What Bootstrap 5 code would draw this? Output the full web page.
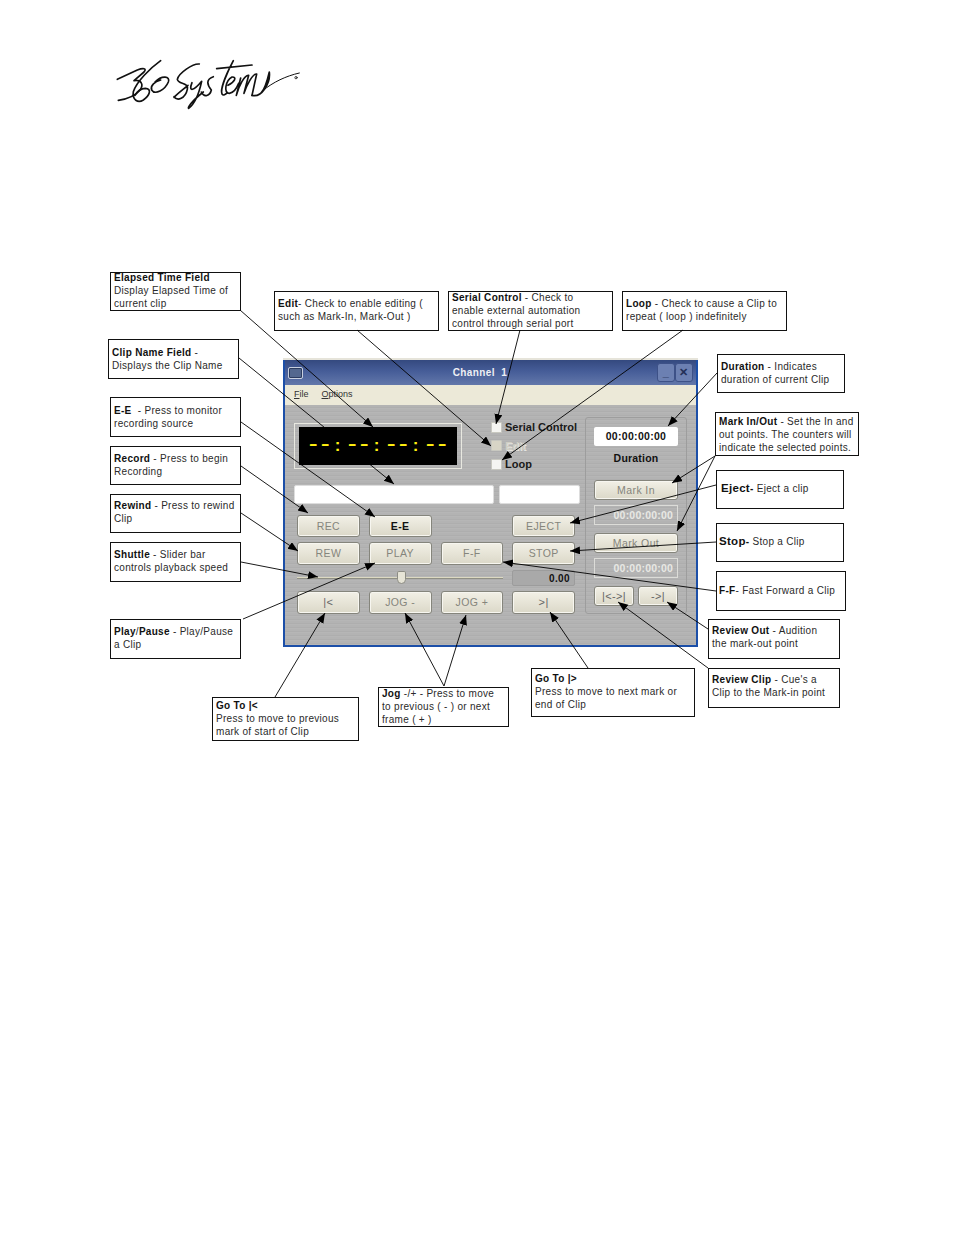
<!DOCTYPE html>
<html lang="en">

<head>
    <meta charset="UTF-8">
    <meta name="viewport" content="width=device-width, initial-scale=1.0">
    <title>Channel 1 control window</title>
    <link href="https://cdn.jsdelivr.net/npm/bootstrap@5.3.0/dist/css/bootstrap.min.css" rel="stylesheet">
    <style>
        body { background: #fff; font-family: "Liberation Sans", Arial, sans-serif; }
        .stage { width: 954px; height: 1235px; overflow: hidden; }
        .logo-mark { left: 100px; top: 40px; width: 220px; height: 80px; }
        .leaders { left: 0; top: 0; z-index: 5; pointer-events: none; }

        /* callouts */
        .callout { background: #fff; border: 1px solid #111; color: #2a2a2a; font-size: 10px; line-height: 13px; letter-spacing: .3px; padding: 0 3px; white-space: nowrap; }
        .callout b { color: #111; }
        .pull-2 { margin-top: -2px; }
        .pull-1 { margin-top: -1px; }
        #c-elapsed { left: 110px; top: 272px; width: 131px; height: 39px; }
        #c-clip { left: 108px; top: 339px; width: 131px; height: 40px; padding-top: 6px; }
        #c-ee { left: 110px; top: 397px; width: 131px; height: 40px; padding-top: 6px; }
        #c-record { left: 110px; top: 446px; width: 131px; height: 39px; padding-top: 5px; }
        #c-rewind { left: 110px; top: 494px; width: 131px; height: 39px; padding-top: 4px; }
        #c-shuttle { left: 110px; top: 542px; width: 131px; height: 40px; padding-top: 5px; }
        #c-play { left: 110px; top: 619px; width: 131px; height: 40px; padding-top: 5px; }
        #c-edit { left: 274px; top: 291px; width: 165px; height: 40px; padding-top: 5px; }
        #c-serial { left: 448px; top: 291px; width: 165px; height: 40px; }
        #c-loop { left: 622px; top: 291px; width: 165px; height: 40px; padding-top: 5px; }
        #c-duration { left: 717px; top: 354px; width: 128px; height: 39px; padding-top: 5px; }
        #c-mark { left: 715px; top: 412px; width: 144px; height: 44px; padding-top: 2px; }
        #c-eject { left: 716px; top: 470px; width: 128px; height: 39px; padding: 11px 4px 0; }
        #c-stop { left: 716px; top: 523px; width: 128px; height: 39px; padding: 11px 2px 0; }
        #c-ff { left: 716px; top: 571px; width: 130px; height: 40px; padding: 12px 2px 0; }
        #c-revout { left: 708px; top: 619px; width: 132px; height: 40px; padding-top: 4px; }
        #c-revclip { left: 708px; top: 668px; width: 132px; height: 40px; padding-top: 4px; }
        #c-gostart { left: 212px; top: 697px; width: 147px; height: 44px; padding-top: 1px; }
        #c-jog { left: 378px; top: 687px; width: 131px; height: 40px; }
        #c-goend { left: 531px; top: 668px; width: 164px; height: 49px; padding-top: 3px; }
        .callout .big { font-size: 11.5px; }

        /* channel window */
        .chan-win { left: 283px; top: 360px; width: 415px; height: 287px; background: #b2b2b2; border: solid #1c4fa8; border-width: 0 2px 2px; box-shadow: 0 -2px 0 #e6e4da; }
        .title-strip { height: 25px; padding: 3px; background: linear-gradient(#34497f, #465d98 45%, #6277aa); color: #eef0f4; font-size: 10px; font-weight: 700; letter-spacing: .4px; }
        .sys-box { width: 15px; height: 12px; border: 1px solid #c8d0e0; border-radius: 2px; background: #54688f; box-shadow: inset 0 0 0 1px #2c3c60; }
        .title-text { white-space: nowrap; }
        .win-ctl { width: 18px; height: 19px; background: #6c80b2; border: 1px solid #3d5187; border-radius: 3px; color: #233058; font-size: 11px; line-height: 17px; text-align: center; }
        .menu-strip { height: 20px; padding-left: 9px; background: #ece9d8; color: #333; font-size: 9px; gap: 13px; }
        .menu-strip u { text-underline-offset: 1px; }
        .metal { height: 240px; padding-left: 9px; background: repeating-linear-gradient(0deg, #b6b6b6 0 1px, #aeaeae 1px 2px, #b3b3b3 2px 4px); }
        .left-side { width: 286px; padding-top: 18px; }
        .clock-frame { width: 168px; height: 46px; border: 1px solid #e8e8e0; padding: 3px 4px; flex-shrink: 0; }
        .clock-face { background: #000; height: 38px; color: #ffef10; font-family: "Liberation Mono", monospace; font-size: 24px; line-height: 36px; letter-spacing: -2.4px; padding-left: 7px; white-space: nowrap; overflow: hidden; }
        .clock-face i { font-family: "Liberation Sans", sans-serif; font-weight: 700; font-style: normal; display: inline-block; width: 15px; text-align: center; font-size: 17px; line-height: 20px; letter-spacing: 0; }
        .checks { height: 46px; padding-left: 29px; margin-top: -5px; flex-shrink: 0; }
        .check-row { height: 18.5px; gap: 3px; font-size: 11px; font-weight: 700; color: #1a1a1a; white-space: nowrap; }
        .check-row.off { color: #cfcdc2; text-shadow: 1px 1px 0 #e4e4e0; }
        .check-dot { width: 11px; height: 11px; background: #f5f5f2; border: 1px solid #c8c8c0; border-radius: 1px; flex-shrink: 0; }
        .off .check-dot { background: #d8d5c6; }
        .blank-field { height: 19px; background: #fff; border: 1px solid #ddd; border-radius: 2px; }
        .field-row { margin-top: 16px; gap: 5px; }
        .w-name { width: 200px; }
        .w-tc { width: 81px; }
        .deck { margin: 11px 0 0 3px; width: 278px; display: grid; grid-template-columns: repeat(4, 1fr); grid-template-rows: 22px 23px 16px 23px; gap: 5px 9px; }
        .deck-btn { padding: 0; background: linear-gradient(#f2f0e6, #dbd8c8); border: 1px solid #85857c; border-radius: 3px; color: #85857c; font-size: 10.5px; letter-spacing: .4px; line-height: 1; box-shadow: inset 0 0 0 1px #f7f6f0; }
        .deck-btn.live { color: #111; font-weight: 700; }
        .btn-tall { font-size: 11px; color: #666; }
        .span-3 { grid-column: span 3; }
        .shuttle { height: 16px; }
        .shuttle-track { height: 2px; background: #dcd9c2; border-bottom: 1px solid #8f8f84; }
        .shuttle-thumb { left: 100px; top: 1px; width: 9px; height: 13px; background: #e6e4d6; border: 1px solid #8c8c84; border-radius: 2px 2px 5px 5px; }
        .speed { background: #a9a9a9; border: 1px solid #9c9c9c; border-radius: 2px; color: #111; font-size: 10px; font-weight: 700; padding-right: 4px; text-align: right; line-height: 15px; letter-spacing: .4px; }
        .right-side { width: 102px; height: 197px; margin: 12px 0 0 5px; border: 1px solid #9d9d9d; border-radius: 3px; padding: 9px 8px 0; }
        .tc-white { height: 19px; background: #fff; border-radius: 2px; color: #111; font-size: 10.5px; font-weight: 700; text-align: center; line-height: 19px; letter-spacing: .3px; }
        .dur-label { font-size: 10.5px; font-weight: 700; color: #111; text-align: center; margin: 6px 0 15px; line-height: 13px; letter-spacing: .2px; }
        .mark-btn { display: block; width: 100%; height: 20px; }
        .tc-ghost { height: 20px; margin: 5px 0 8px; border: 1px solid #dcdcd8; color: #e8e8e4; font-size: 10.5px; font-weight: 700; text-align: right; line-height: 19px; padding-right: 4px; letter-spacing: .2px; }
        .review-row { gap: 4px; }
        .review-row .deck-btn { flex: 1; height: 20px; }
    </style>
</head>

<body class="m-0">
    <div class="stage position-relative">

        <!-- logo -->
        <svg class="logo-mark position-absolute" viewBox="0 0 660 240" fill="none" stroke="#111" stroke-width="5" stroke-linecap="round" stroke-linejoin="round">
            <path d="M52 118 L112 90 C128 84 142 84 132 96 L102 122 C124 118 132 134 120 150 C104 170 76 178 55 181" />
            <path d="M182 62 C150 85 110 125 100 155 C96 180 114 190 130 180 C150 166 156 146 136 145 C122 145 112 154 105 166" />
            <path d="M165 126 C185 105 212 108 205 126 C195 150 165 166 155 150 C150 136 165 125 182 120" />
            <path d="M298 72 C278 70 236 100 232 118 C235 134 266 126 262 148 C256 176 232 184 222 170 M222 172 C236 158 250 148 264 136" />
            <path d="M276 128 C264 158 282 152 305 124 C298 156 286 190 266 205 C262 204 272 186 310 156" />
            <path d="M340 110 C316 118 322 136 334 150 C330 168 312 174 304 156" />
            <path d="M400 62 C380 100 360 148 366 162 C370 168 376 164 382 158 M350 86 L456 75" />
            <path d="M384 136 C404 126 412 110 396 111 C376 122 370 160 388 160 C402 158 410 145 416 130" />
            <path d="M422 114 L409 166 C416 138 434 104 446 106 L432 160 C440 136 458 100 470 102 L456 166" />
            <path d="M456 166 C484 174 512 130 508 96 C500 130 494 148 484 158" />
            <path d="M488 152 C520 126 558 108 598 99" stroke-width="3" />
            <circle cx="588" cy="113" r="3.5" stroke-width="2.4" />
        </svg>

        <!-- channel window -->
        <div class="chan-win position-absolute">
            <div class="title-strip d-flex align-items-center">
                <span class="sys-box"></span>
                <span class="title-text flex-grow-1 text-center">Channel &nbsp;1</span>
                <span class="win-ctl">_</span>
                <span class="win-ctl">✕</span>
            </div>
            <div class="menu-strip d-flex align-items-center">
                <span><u>F</u>ile</span>
                <span><u>O</u>ptions</span>
            </div>
            <div class="metal d-flex">
                <div class="left-side">
                    <div class="d-flex">
                        <div class="clock-frame">
                            <div class="clock-face">--<i>:</i>--<i>:</i>--<i>:</i>--</div>
                        </div>
                        <div class="checks">
                            <div class="check-row d-flex align-items-center"><span class="check-dot"></span>Serial Control</div>
                            <div class="check-row off d-flex align-items-center"><span class="check-dot"></span>Edit</div>
                            <div class="check-row d-flex align-items-center"><span class="check-dot"></span>Loop</div>
                        </div>
                    </div>
                    <div class="field-row d-flex">
                        <div class="blank-field w-name"></div>
                        <div class="blank-field w-tc"></div>
                    </div>
                    <div class="deck">
                        <button class="btn deck-btn">REC</button>
                        <button class="btn deck-btn live">E-E</button>
                        <span></span>
                        <button class="btn deck-btn">EJECT</button>

                        <button class="btn deck-btn">REW</button>
                        <button class="btn deck-btn">PLAY</button>
                        <button class="btn deck-btn">F-F</button>
                        <button class="btn deck-btn">STOP</button>

                        <div class="shuttle span-3 position-relative d-flex align-items-center">
                            <div class="shuttle-track w-100"></div>
                            <span class="shuttle-thumb position-absolute"></span>
                        </div>
                        <div class="speed">0.00</div>

                        <button class="btn deck-btn btn-tall">|&lt;</button>
                        <button class="btn deck-btn">JOG -</button>
                        <button class="btn deck-btn">JOG +</button>
                        <button class="btn deck-btn btn-tall">&gt;|</button>
                    </div>
                </div>
                <div class="right-side">
                    <div class="tc-white">00:00:00:00</div>
                    <div class="dur-label">Duration</div>
                    <button class="btn deck-btn mark-btn">Mark In</button>
                    <div class="tc-ghost">00:00:00:00</div>
                    <button class="btn deck-btn mark-btn">Mark Out</button>
                    <div class="tc-ghost">00:00:00:00</div>
                    <div class="review-row d-flex">
                        <button class="btn deck-btn btn-tall">|&lt;-&gt;|</button>
                        <button class="btn deck-btn btn-tall">-&gt;|</button>
                    </div>
                </div>
            </div>
        </div>

        <!-- callouts -->
        <div id="c-elapsed" class="callout position-absolute"><div class="pull-2"><b>Elapsed Time Field</b><br>Display Elapsed Time of<br>current clip</div></div>
        <div id="c-clip" class="callout position-absolute"><b>Clip Name Field</b> -<br>Displays the Clip Name</div>
        <div id="c-ee" class="callout position-absolute"><b>E-E</b> &nbsp;- Press to monitor<br>recording source</div>
        <div id="c-record" class="callout position-absolute"><b>Record</b> - Press to begin<br>Recording</div>
        <div id="c-rewind" class="callout position-absolute"><b>Rewind</b> - Press to rewind<br>Clip</div>
        <div id="c-shuttle" class="callout position-absolute"><b>Shuttle</b> - Slider bar<br>controls playback speed</div>
        <div id="c-play" class="callout position-absolute"><b>Play</b>/<b>Pause</b> - Play/Pause<br>a Clip</div>
        <div id="c-edit" class="callout position-absolute"><b>Edit</b>- Check to enable editing (<br>such as Mark-In, Mark-Out )</div>
        <div id="c-serial" class="callout position-absolute"><div class="pull-1"><b>Serial Control</b> - Check to<br>enable external automation<br>control through serial port</div></div>
        <div id="c-loop" class="callout position-absolute"><b>Loop</b> - Check to cause a Clip to<br>repeat ( loop ) indefinitely</div>
        <div id="c-duration" class="callout position-absolute"><b>Duration</b> - Indicates<br>duration of current Clip</div>
        <div id="c-mark" class="callout position-absolute"><b>Mark In/Out</b> - Set the In and<br>out points. The counters will<br>indicate the selected points.</div>
        <div id="c-eject" class="callout position-absolute"><b class="big">Eject</b><b>-</b> Eject a clip</div>
        <div id="c-stop" class="callout position-absolute"><b class="big">Stop</b><b>-</b> Stop a Clip</div>
        <div id="c-ff" class="callout position-absolute"><b>F-F</b>- Fast Forward a Clip</div>
        <div id="c-revout" class="callout position-absolute"><b>Review Out</b> - Audition<br>the mark-out point</div>
        <div id="c-revclip" class="callout position-absolute"><b>Review Clip</b> - Cue's a<br>Clip to the Mark-in point</div>
        <div id="c-gostart" class="callout position-absolute"><b>Go To |&lt;</b><br>Press to move to previous<br>mark of start of Clip</div>
        <div id="c-jog" class="callout position-absolute"><div class="pull-1"><b>Jog</b> -/+ - Press to move<br>to previous ( - ) or next<br>frame ( + )</div></div>
        <div id="c-goend" class="callout position-absolute"><b>Go To |&gt;</b><br>Press to move to next mark or<br>end of Clip</div>

        <!-- leader lines -->
        <svg class="leaders position-absolute" width="954" height="1235" stroke="#000" stroke-width="0.9" fill="none">
            <defs>
                <marker id="head" markerUnits="userSpaceOnUse" markerWidth="11" markerHeight="9" refX="10" refY="4" orient="auto">
                    <path d="M0 0 L10 4 L0 8 Z" fill="#000" stroke="none" />
                </marker>
            </defs>
            <g marker-end="url(#head)">
                <line x1="240" y1="310" x2="373" y2="427" />
                <line x1="239" y1="358" x2="394" y2="484" />
                <line x1="241" y1="422" x2="375" y2="517" />
                <line x1="241" y1="466" x2="308" y2="513" />
                <line x1="241" y1="513" x2="298" y2="551" />
                <line x1="241" y1="562" x2="318" y2="577" />
                <line x1="243" y1="619" x2="375" y2="563" />
                <line x1="357" y1="330" x2="491" y2="446" />
                <line x1="520" y1="330" x2="496" y2="424" />
                <line x1="683" y1="330" x2="502" y2="460" />
                <line x1="717" y1="373" x2="668" y2="426" />
                <line x1="715" y1="456" x2="672" y2="483" />
                <line x1="715" y1="456" x2="677" y2="531" />
                <line x1="716" y1="485" x2="570" y2="523" />
                <line x1="716" y1="542" x2="570" y2="551" />
                <line x1="716" y1="591" x2="503" y2="562" />
                <line x1="708" y1="629" x2="667" y2="602" />
                <line x1="708" y1="668" x2="618" y2="602" />
                <line x1="275" y1="697" x2="325" y2="613" />
                <line x1="444" y1="686" x2="405" y2="613" />
                <line x1="444" y1="686" x2="466" y2="615" />
                <line x1="588" y1="668" x2="550" y2="612" />
            </g>
        </svg>
    </div>

    <script src="https://cdn.jsdelivr.net/npm/bootstrap@5.3.0/dist/js/bootstrap.bundle.min.js"></script>
</body>

</html>
